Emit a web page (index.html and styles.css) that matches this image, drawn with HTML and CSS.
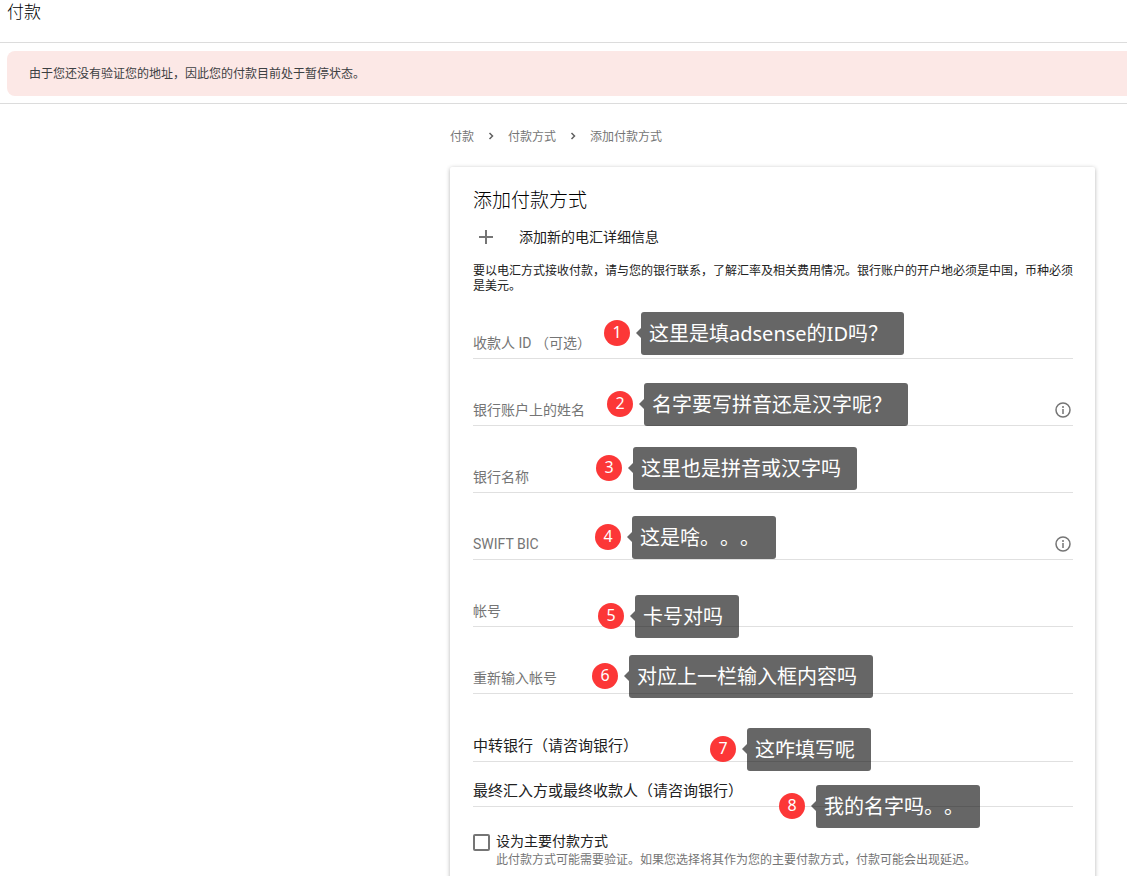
FILE: index.html
```html
<!DOCTYPE html>
<html lang="zh-CN">
<head>
<meta charset="utf-8">
<meta name="viewport" content="width=device-width, initial-scale=1">
<title>付款</title>
<link rel="stylesheet" href="styles.css">
</head>
<body>
<header class="topbar"><h1 class="topbar-title">付款</h1></header>
<div class="alert-band"><p class="alert" role="alert">由于您还没有验证您的地址，因此您的付款目前处于暂停状态。</p></div>
<main class="content">
  <nav class="breadcrumb" aria-label="路径">
    <a href="#">付款</a>
    <svg class="chevron" viewBox="0 0 8 10" aria-hidden="true"><path d="M2.5 2 5.5 5 2.5 8"/></svg>
    <a href="#">付款方式</a>
    <svg class="chevron" viewBox="0 0 8 10" aria-hidden="true"><path d="M2.5 2 5.5 5 2.5 8"/></svg>
    <a href="#">添加付款方式</a>
  </nav>
  <section class="card">
    <h2 class="card-title">添加付款方式</h2>
    <div class="add-row">
      <svg class="plus" viewBox="0 0 14 14" aria-hidden="true"><path d="M7 0v14M0 7h14"/></svg>
      <span>添加新的电汇详细信息</span>
    </div>
    <p class="note">要以电汇方式接收付款，请与您的银行联系，了解汇率及相关费用情况。银行账户的开户地必须是中国，币种必须是美元。</p>
    <form class="form">
      <div class="field"><label for="payee">收款人 ID （可选）</label><input id="payee" type="text"></div>
      <div class="field"><label for="name">银行账户上的姓名</label><input id="name" type="text">
        <button class="info" type="button" aria-label="姓名说明"><svg viewBox="0 0 16 16"><circle cx="8" cy="8" r="7"/><path d="M8 7v5M8 4v2"/></svg></button></div>
      <div class="field"><label for="bank">银行名称</label><input id="bank" type="text"></div>
      <div class="field"><label for="swift">SWIFT BIC</label><input id="swift" type="text">
        <button class="info" type="button" aria-label="代码说明"><svg viewBox="0 0 16 16"><circle cx="8" cy="8" r="7"/><path d="M8 7v5M8 4v2"/></svg></button></div>
      <div class="field"><label for="account">帐号</label><input id="account" type="text"></div>
      <div class="field"><label for="account2">重新输入帐号</label><input id="account2" type="text"></div>
      <button class="section section-first" type="button">中转银行（请咨询银行）</button>
      <button class="section" type="button">最终汇入方或最终收款人（请咨询银行）</button>
      <div class="primary">
        <input class="checkbox" id="primary" type="checkbox" aria-describedby="primary-hint">
        <div>
          <label class="primary-label" for="primary">设为主要付款方式</label>
          <p class="hint" id="primary-hint">此付款方式可能需要验证。如果您选择将其作为您的主要付款方式，付款可能会出现延迟。</p>
        </div>
      </div>
    </form>
    <div class="callout c1"><span class="marker">1</span><span class="bubble">这里是填adsense的ID吗？</span></div>
    <div class="callout c2"><span class="marker">2</span><span class="bubble">名字要写拼音还是汉字呢？</span></div>
    <div class="callout c3"><span class="marker">3</span><span class="bubble">这里也是拼音或汉字吗</span></div>
    <div class="callout c4"><span class="marker">4</span><span class="bubble">这是啥。。。</span></div>
    <div class="callout c5"><span class="marker">5</span><span class="bubble">卡号对吗</span></div>
    <div class="callout c6"><span class="marker">6</span><span class="bubble">对应上一栏输入框内容吗</span></div>
    <div class="callout c7"><span class="marker">7</span><span class="bubble">这咋填写呢</span></div>
    <div class="callout c8"><span class="marker">8</span><span class="bubble">我的名字吗。。</span></div>
  </section>
</main>
</body>
</html>
```
FILE: styles.css
```css
* { box-sizing: border-box; }
body {
  margin: 0;
  background: #fff;
  color: #212121;
  font-family: Roboto, "Noto Sans CJK SC", sans-serif;
  font-size: 14px;
  font-weight: 400;
  text-spacing-trim: space-all;
}
h1, h2, p { margin: 0; font-weight: inherit; }
button, input { font: inherit; color: inherit; }

.topbar { height: 43px; padding-left: 7px; border-bottom: 1px solid #dcdcdc; }
.topbar-title { font-size: 17px; font-weight: 300; line-height: 25px; color: #000; }
.alert-band { padding: 8px 0 7px 7px; border-bottom: 1px solid #dcdcdc; }
.alert {
  padding: 1px 22px 0;
  border-radius: 8px 0 0 8px;
  background: #fce8e6;
  color: #3c4043;
  font-size: 12px;
  line-height: 44px;
}

.content { margin: 0 32px 0 450px; }
.breadcrumb {
  display: flex;
  align-items: center;
  gap: 13px;
  height: 63px;
  font-size: 12px;
  color: #757575;
}
.breadcrumb a { color: inherit; text-decoration: none; }
.chevron { width: 8px; height: 10px; fill: none; stroke: #616161; stroke-width: 1.5; }

.card {
  position: relative;
  padding: 22px 22px 24px 23px;
  border-radius: 2px;
  background: #fff;
  box-shadow: 0 1px 4px rgba(0, 0, 0, .3);
}
.card-title { font-size: 19px; font-weight: 300; line-height: 24px; color: #000; }
.add-row {
  display: flex;
  align-items: center;
  gap: 26px;
  height: 24px;
  margin: 12px 0 15px;
  padding-left: 6px;
  line-height: 20px;
}
.plus { width: 14px; height: 14px; fill: none; stroke: #757575; stroke-width: 2; }
.note { font-size: 12px; line-height: 15px; }

.form { margin-top: -2px; }
.field {
  display: flex;
  align-items: flex-end;
  height: 67px;
  padding-bottom: 5px;
  border-bottom: 1px solid #e0e0e0;
  line-height: 20px;
  color: #757575;
}
.field input { flex: 1; min-width: 0; height: 20px; padding: 0 8px; border: 0; outline: 0; background: none; }
.info { display: flex; width: 20px; height: 20px; padding: 2px; border: 0; background: none; }
.info svg { width: 16px; height: 16px; fill: none; stroke: #757575; stroke-width: 1.5; }
.section {
  display: block;
  width: 100%;
  padding: 19px 0 5px;
  border: 0;
  border-bottom: 1px solid #e0e0e0;
  background: none;
  font-size: 15px;
  line-height: 20px;
  text-align: left;
}
.section-first { padding-top: 42px; }

.primary { display: flex; gap: 6px; padding-top: 25px; }
.checkbox {
  flex: none;
  appearance: none;
  width: 17px;
  height: 17px;
  margin: 2px 0 0;
  border: 2px solid #757575;
  border-radius: 2px;
  background: #fff;
}
.checkbox:checked { background: #757575; }
.primary-label { display: block; line-height: 18px; }
.hint { font-size: 12px; line-height: 20px; color: #757575; }

.callout {
  position: absolute;
  display: flex;
  align-items: flex-start;
  gap: 11px;
  color: #fff;
  font-family: "Noto Sans", "Noto Sans CJK SC", sans-serif;
  white-space: nowrap;
}
.marker {
  width: 26px;
  height: 26px;
  margin-top: 8px;
  border-radius: 50%;
  background: #fc3737;
  font-size: 16px;
  line-height: 24px;
  text-align: center;
}
.bubble {
  position: relative;
  height: 43px;
  padding: 0 16px 0 8px;
  border-radius: 3px;
  background: rgba(0, 0, 0, .6);
  font-size: 20px;
  line-height: 43px;
}
.bubble::before {
  content: "";
  position: absolute;
  top: 16px;
  right: 100%;
  border: 5px solid transparent;
  border-left-width: 0;
  border-right-color: rgba(0, 0, 0, .6);
}
.c1 { left: 154px; top: 145px; }
.c2 { left: 157px; top: 216px; }
.c3 { left: 146px; top: 280px; }
.c4 { left: 145px; top: 349px; }
.c5 { left: 148px; top: 428px; }
.c6 { left: 142px; top: 488px; }
.c7 { left: 260px; top: 561px; }
.c8 { left: 329px; top: 618px; }
```
